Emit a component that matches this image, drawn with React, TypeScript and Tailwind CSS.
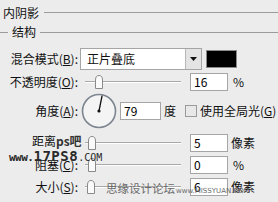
import React from "react";

const font = { fontFamily: '"Noto Sans CJK SC", "Noto Sans", sans-serif' };

function Thumb() {
  return (
    <svg width="10" height="14" viewBox="0 0 10 14" className="block">
      <path d="M1.5 13.5 V5 Q1.5 0.5 5 0.5 Q8.5 0.5 8.5 5 V13.5 Z" fill="#fafafa" stroke="#8a8a8a" />
    </svg>
  );
}

function Slider({ thumb }: { thumb: number }) {
  return (
    <div className="relative ml-[7px] h-full w-[96px]">
      <div className="absolute left-0 right-0 top-1/2 h-[2px] -translate-y-1/2 border-t border-b border-t-[#a8a8a8] border-b-white" />
      <div className="absolute top-1/2 -translate-y-1/2" style={{ left: thumb }}>
        <Thumb />
      </div>
    </div>
  );
}

function Field({ value, w = 38 }: { value: string; w?: number }) {
  return (
    <div
      className="flex h-[18px] items-center border border-[#a5a5a5] bg-white pl-[3px] text-[12px] leading-none text-black"
      style={{ width: w }}
    >
      {value}
    </div>
  );
}

function Label({ children }: { children: React.ReactNode }) {
  return <div className="w-[78px] shrink-0 text-right text-[12px] leading-none text-[#111]">{children}</div>;
}

export default function App() {
  return (
    <div className="relative h-[202px] w-[278px] overflow-hidden bg-[#ececec] text-[#111]" style={font}>
      <div className="flex h-[25px] items-center">
        <span className="ml-[3px] text-[12px] leading-none">内阴影</span>
        <div className="ml-[5px] h-px flex-1 bg-[#9c9c9c]" />
      </div>
      <div className="flex h-[14px] items-center">
        <div className="h-px w-[8px] bg-[#9c9c9c]" />
        <span className="ml-[4px] text-[12px] leading-none">结构</span>
        <div className="ml-[4px] h-px flex-1 bg-[#9c9c9c]" />
      </div>

      <div className="mt-[9px] flex h-[22px] items-center">
        <Label>
          混合模式(<span className="underline">B</span>):
        </Label>
        <div className="ml-[2px] flex h-[22px] w-[122px] border border-[#a5a5a5] bg-white">
          <div className="flex flex-1 items-center pl-[6px] text-[12px] leading-none">正片叠底</div>
          <div className="flex w-[16px] items-center justify-center border-l border-[#b8b8b8] bg-[#e4e4e4]">
            <svg width="7" height="4" viewBox="0 0 7 4">
              <path d="M0 0 H7 L3.5 4 Z" fill="#111" />
            </svg>
          </div>
        </div>
        <div className="ml-[4px] h-[18px] w-[31px] border border-[#8a8a8a] bg-black" />
      </div>

      <div className="mt-[3px] flex h-[17px] items-center">
        <Label>
          不透明度(<span className="underline">O</span>):
        </Label>
        <Slider thumb={9} />
        <div className="ml-[9px]">
          <Field value="16" />
        </div>
        <span className="ml-[5px] text-[12px] leading-none">%</span>
      </div>

      <div className="mt-[2px] flex h-[38px] items-center">
        <Label>
          角度(<span className="underline">A</span>):
        </Label>
        <svg width="36" height="36" viewBox="0 0 36 36" className="ml-[3px] shrink-0">
          <circle cx="18" cy="18" r="16.5" fill="#f4f4f4" stroke="#7d8590" strokeWidth="1.6" />
          <line x1="18" y1="18" x2="21.1" y2="2.6" stroke="#111" strokeWidth="1.3" />
          <circle cx="18" cy="18" r="1.6" fill="#111" />
        </svg>
        <div className="ml-[3px]">
          <Field value="79" w={41} />
        </div>
        <span className="ml-[3px] text-[12px] leading-none">度</span>
        <div className="ml-[9px] h-[12px] w-[12px] border border-[#9a9a9a] bg-[#e8e8e8]" />
        <span className="ml-[3px] whitespace-nowrap text-[12px] leading-none">
          使用全局光(<span className="underline">G</span>)
        </span>
      </div>

      <div className="mt-[4px] flex h-[18px] items-center">
        <div className="-mt-[4px] w-[78px] shrink-0 pl-[32px] text-[12px] leading-none whitespace-nowrap">
          距离<span className="font-bold text-[#333]">ps吧</span>
        </div>
        <Slider thumb={2} />
        <div className="ml-[9px]">
          <Field value="5" />
        </div>
        <span className="ml-[3px] text-[12px] leading-none">像素</span>
      </div>

      <div className="mt-[4px] flex h-[18px] items-center">
        <Label>
          阻塞(<span className="underline">C</span>):
        </Label>
        <Slider thumb={2} />
        <div className="ml-[9px]">
          <Field value="0" />
        </div>
        <span className="ml-[5px] text-[12px] leading-none">%</span>
      </div>

      <div className="mt-[4px] flex h-[18px] items-center">
        <Label>
          大小(<span className="underline">S</span>):
        </Label>
        <Slider thumb={1} />
        <div className="ml-[9px]">
          <Field value="6" />
        </div>
        <span className="ml-[3px] text-[12px] leading-none">像素</span>
      </div>

      {/* watermarks */}
      <div
        className="absolute left-[9px] top-[149px] flex items-end whitespace-nowrap font-bold leading-none text-[#2a2a2a]"
        style={{ fontFamily: '"DejaVu Sans Mono", monospace' }}
      >
        <span className="text-[11px] tracking-[-0.5px]">www.</span>
        <span className="text-[14px] tracking-[0.5px]">17PS8</span>
        <span className="text-[10px] font-normal">.COM</span>
      </div>
      <div className="absolute left-[106px] top-[183px] flex items-end whitespace-nowrap leading-none text-[#6a6a6a]">
        <span className="text-[11.5px]">思缘设计论坛</span>
        <span className="ml-[1px] text-[7px]" style={{ fontFamily: '"DejaVu Sans", sans-serif' }}>
          www.MISSYUAN.COM
        </span>
      </div>
    </div>
  );
}
